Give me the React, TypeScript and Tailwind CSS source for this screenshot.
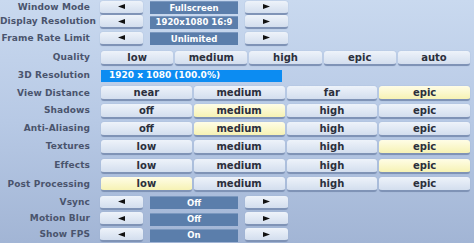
import React from 'react';

const font = { fontFamily: '"DejaVu Sans", Verdana, sans-serif' };

const Arrow = ({ dir }: { dir: 'left' | 'right' }) => (
  <svg width="7" height="5" viewBox="0 0 7 5">
    {dir === 'left' ? <polygon points="0,2.5 7,0 7,5" fill="#111" /> : <polygon points="7,2.5 0,0 0,5" fill="#111" />}
  </svg>
);

const Btn = ({ label, on }: { label: string; on?: boolean }) => (
  <div
    className={
      'flex-1 h-[15px] rounded-[3px] flex items-center justify-center text-[10px] font-bold text-[#2b2f3c] border-b-2 border-[#7f93b6] shadow-[0_0_1px_#8ea2c4] ' +
      (on ? 'bg-gradient-to-b from-[#fffde6] to-[#f6f2b4]' : 'bg-gradient-to-b from-[#eef3fa] to-[#d3deee]')
    }
  >
    {label}
  </div>
);

const ArrowBtn = ({ dir }: { dir: 'left' | 'right' }) => (
  <div className="w-[43px] h-[14px] rounded-[3px] flex items-center justify-center border-b-2 border-[#7f93b6] bg-gradient-to-b from-[#eef3fa] to-[#d3deee] shadow-[0_0_1px_#8ea2c4]">
    <Arrow dir={dir} />
  </div>
);

const Label = ({ text }: { text: string }) => (
  <div className="w-[90px] shrink-0 text-right text-[9px] font-semibold text-[#4a546d] whitespace-nowrap tracking-[0.1px]">{text}</div>
);

const Selector = ({ label, value, cls }: { label: string; value: string; cls: string }) => (
  <div className={'flex items-center ' + cls}>
    <Label text={label} />
    <div className="ml-[10px] flex items-center gap-[7px]">
      <ArrowBtn dir="left" />
      <div className="w-[88px] h-[13px] bg-[#5b7eab] border-t border-[#7b98bf] flex items-center justify-center text-[8.5px] font-bold text-white">{value}</div>
      <ArrowBtn dir="right" />
    </div>
  </div>
);

const Options = ({ label, items, sel, cls }: { label: string; items: string[]; sel: number; cls: string }) => (
  <div className={'flex items-center ' + cls}>
    <Label text={label} />
    <div className="ml-[11px] w-[369px] flex gap-[2px]">
      {items.map((it, i) => (
        <Btn key={i} label={it} on={i === sel} />
      ))}
    </div>
  </div>
);

const four = ['low', 'medium', 'high', 'epic'];
const offs = ['off', 'medium', 'high', 'epic'];

export default function App() {
  return (
    <div style={font} className="w-[474px] h-[243px] overflow-hidden bg-gradient-to-b from-[#c9d9ef] via-[#b7c9e5] to-[#a2b5d5] flex flex-col">
      <Selector label="Window Mode" value="Fullscreen" cls="h-[15px]" />
      <Selector label="Display Resolution" value="1920x1080 16:9" cls="h-[14px]" />
      <Selector label="Frame Rate Limit" value="Unlimited" cls="mt-[2px] h-[15px]" />
      <Options label="Quality" items={['low', 'medium', 'high', 'epic', 'auto']} sel={-1} cls="mt-[4px] h-[16px]" />
      <div className="flex items-center mt-[2px] h-[16px]">
        <Label text="3D Resolution" />
        <div className="ml-[11px] w-[181px] h-[12px] bg-[#0c8cf2] flex items-center pl-[8px] text-[9px] font-bold text-white">
          1920 x 1080 (100.0%)
        </div>
      </div>
      <Options label="View Distance" items={['near', 'medium', 'far', 'epic']} sel={3} cls="mt-[1px] h-[17px]" />
      <Options label="Shadows" items={offs} sel={1} cls="h-[18px]" />
      <Options label="Anti-Aliasing" items={offs} sel={1} cls="h-[18px]" />
      <Options label="Textures" items={four} sel={3} cls="h-[18px]" />
      <Options label="Effects" items={four} sel={3} cls="mt-[1px] h-[18px]" />
      <Options label="Post Processing" items={four} sel={0} cls="h-[19px]" />
      <Selector label="Vsync" value="Off" cls="h-[17px]" />
      <Selector label="Motion Blur" value="Off" cls="h-[16px]" />
      <Selector label="Show FPS" value="On" cls="h-[16px]" />
    </div>
  );
}
